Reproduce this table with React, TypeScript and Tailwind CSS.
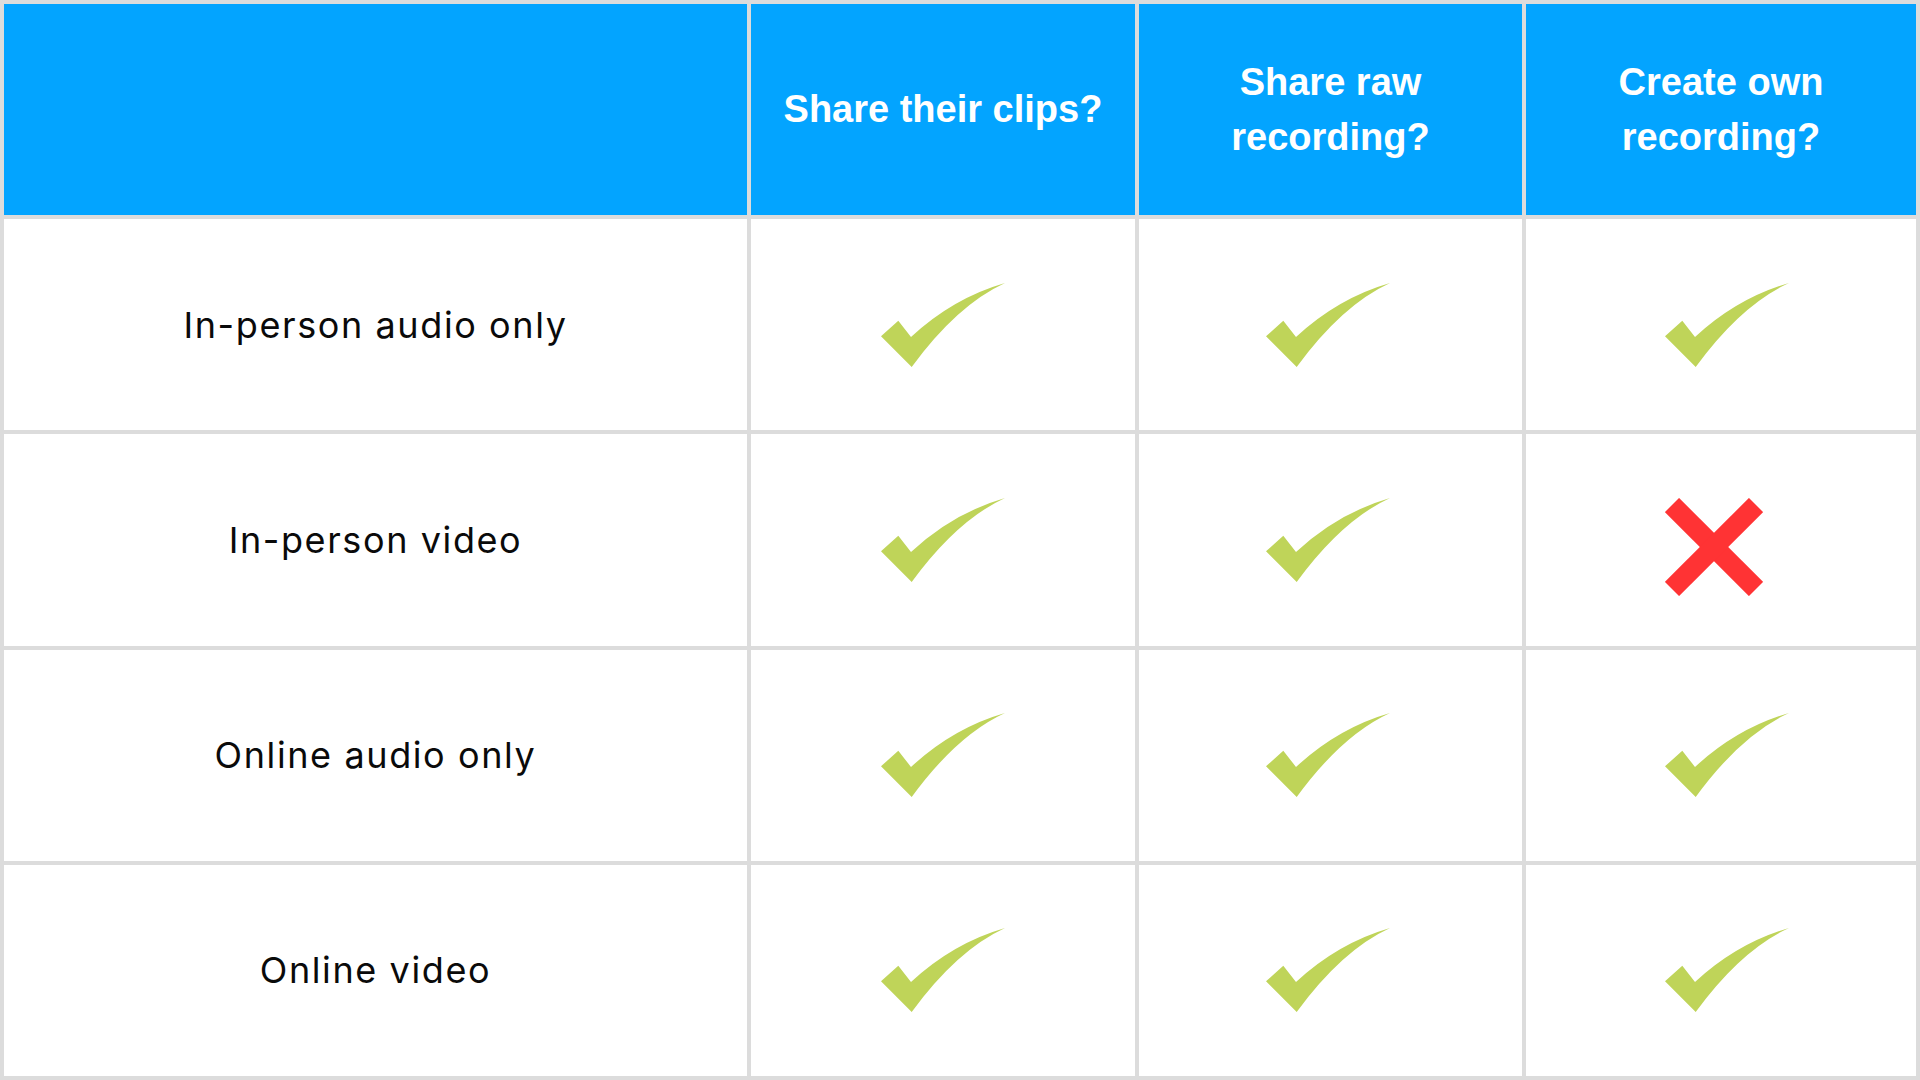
import React from "react";

const Check = ({ cls = "" }: { cls?: string }) => (
  <svg width="124" height="84" viewBox="0 0 124 84" className={cls}>
    <path d="M0 53.3 L17.3 37.7 L30 54 Q 72 15 124 0 Q 76 22 30.7 84 Z" fill="#bfd459" />
  </svg>
);

const Cross = () => (
  <svg width="98" height="98" viewBox="0 0 98 98" className="-translate-x-[7px] translate-y-[7px]">
    <line x1="7" y1="7" x2="91" y2="91" stroke="#ff3334" strokeWidth="20" />
    <line x1="91" y1="7" x2="7" y2="91" stroke="#ff3334" strokeWidth="20" />
  </svg>
);

const rows: { label: string; cells: ("y" | "n")[] }[] = [
  { label: "In-person audio only", cells: ["y", "y", "y"] },
  { label: "In-person video", cells: ["y", "y", "n"] },
  { label: "Online audio only", cells: ["y", "y", "y"] },
  { label: "Online video", cells: ["y", "y", "y"] },
];

const checkShift = ["", "-translate-x-[3px]", "translate-x-[6px]"];

const headCls =
  "bg-[#03a4ff] flex items-center justify-center text-white font-bold text-[38px] leading-[55px] text-center";

export default function App() {
  return (
    <div className="w-[1920px] h-[1080px] bg-[#dcdcdc] p-[4px] grid grid-cols-[743px_384px_383px_1fr] grid-rows-[211px_1fr_1fr_1fr_1fr] gap-[4px] font-['Liberation_Sans',Arial,sans-serif]">
      <div className="bg-[#03a4ff]" />
      <div className={headCls}>Share their clips?</div>
      <div className={headCls}>
        Share raw
        <br />
        recording?
      </div>
      <div className={headCls}>
        Create own
        <br />
        recording?
      </div>
      {rows.map((r) => (
        <React.Fragment key={r.label}>
          <div className="bg-white flex items-center justify-center text-[36px] tracking-[1.6px] text-[#0a0a0a] font-['Inter',sans-serif]">
            {r.label}
          </div>
          {r.cells.map((c, i) => (
            <div key={i} className="bg-white flex items-center justify-center">
              {c === "y" ? <Check cls={checkShift[i]} /> : <Cross />}
            </div>
          ))}
        </React.Fragment>
      ))}
    </div>
  );
}
